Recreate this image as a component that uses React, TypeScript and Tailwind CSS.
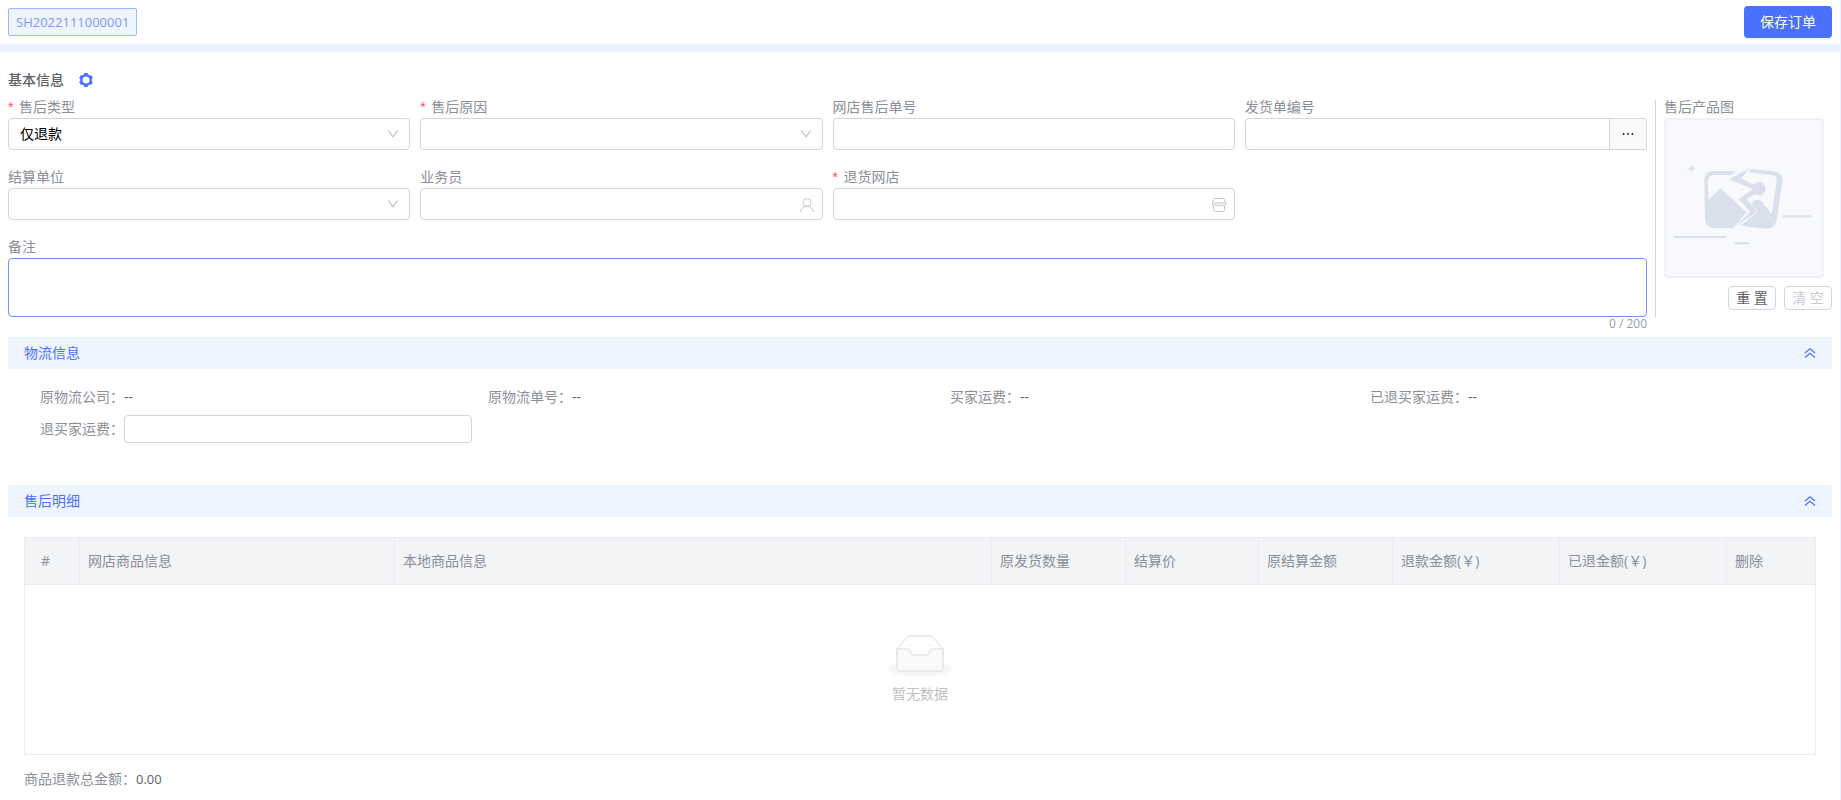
import React, { useState } from "react";
import { AiOutlineDown, AiOutlineEllipsis } from "react-icons/ai";

const inputClass =
  "block h-8 w-full rounded border border-[#d0d4dd] bg-white px-[11px] text-black outline-none";

interface FieldProps {
  id: string;
  label: string;
  required?: boolean;
  children: React.ReactNode;
}

const Field: React.FC<FieldProps> = ({ id, label, required, children }) => (
  <div>
    <label htmlFor={id} className="flex h-[22px] items-center text-[#8c8f96]">
      {required && (
        <span className="mr-1 w-[7px] font-['Liberation_Sans'] text-[#ff4d4f]">*</span>
      )}
      {label}
    </label>
    {children}
  </div>
);

interface SelectProps {
  id: string;
  options: string[];
}

const Select: React.FC<SelectProps> = ({ id, options }) => (
  <div className="relative">
    <select id={id} className={`${inputClass} appearance-none`}>
      {options.map((option) => (
        <option key={option}>{option}</option>
      ))}
    </select>
    <AiOutlineDown className="pointer-events-none absolute top-[9px] right-2.5 h-3.5 w-3.5 text-[#bfbfbf]" />
  </div>
);

const GearIcon = () => (
  <svg viewBox="0 0 14 14" className="h-3.5 w-3.5" fill="none" stroke="currentColor">
    <circle cx="7" cy="7" r="4.700" strokeWidth="2.400" />
    <path
      strokeWidth="3.600"
      d="M7 0v2M7 12v2M.94 3.500l1.730 1M11.330 9.500l1.730 1M.94 10.500l1.730-1M11.330 4.500l1.730-1"
    />
  </svg>
);

const UserIcon = () => (
  <svg viewBox="0 0 14 14" className="h-3.5 w-3.5" fill="none" stroke="currentColor">
    <circle cx="7" cy="4.6" r="4" />
    <path d="M.6 13.9C.8 10.8 3 8.3 7 8.3s6.200 2.500 6.400 5.600" />
  </svg>
);

const ShopIcon = () => (
  <svg viewBox="0 0 14 14" className="h-3.5 w-3.5" fill="none" stroke="currentColor">
    <path d="M2.600.5h8.800c.6 0 1 .3 1.200.9l.9 3.600H.5l.9-3.600C1.600.8 2 .5 2.600.5z" />
    <path d="M.5 5v1.400c0 .8.6 1.300 1.400 1.300 1 0 1.500-.5 2-1.100.7.8 1.200 1.100 1.900 1.100.600 0 .9-.4 1.200-1.100.4.7.7 1.100 1.300 1.100.7 0 1.200-.3 1.800-1.100.5.6 1 1.100 2 1.100.8 0 1.400-.5 1.400-1.300V5" />
    <path d="M1.500 8v3.500c0 1.300.7 2 2 2h7c1.300 0 2-.7 2-2V8" />
  </svg>
);

const DoubleUpIcon = () => (
  <svg viewBox="0 0 12 12" className="h-3 w-3" fill="none" stroke="currentColor" strokeWidth="1.2">
    <path d="M1 6l5-4.300L11 6M1 10.500l5-4.300 5 4.300" />
  </svg>
);

const BrokenImage = () => (
  <svg viewBox="6 6 468 468" className="block h-full w-full" fill="#dae0eb">
    <path d="M83 137c2 9 4 12 14 14-10 2-12 5-14 14-2-9-4-12-14-14 10-2 12-5 14-14z" />
    <rect x="28" y="354" width="160" height="6" rx="3" />
    <rect x="210" y="373" width="46" height="6" rx="3" />
    <rect x="355" y="292" width="87" height="6" rx="3" />
    {/* left half */}
    <path d="M215 159h-65c-18 0-29 12-29 30l2 111c0 18 12 31 30 31h54l41-48-78-72-37 36-1-56c0-13 6-20 18-20h52z" />
    {/* crack and sun */}
    <path d="M257 150l-61 34 70 30-42 29 35 38-46 46 66-46-31-38 24-15c5 3 10 4 15 4a20 20 0 1 0-18-32l-37-19z" />
    {/* right half */}
    <path d="M263 153l64 7c20 2 30 14 28 33l-17 111c-3 19-14 29-32 28l-77-9 53-41-20-23c10-16 23-18 34-5l27 34 15-98c1-12-4-18-15-19l-70-8z" />
  </svg>
);

const EmptyIcon = () => (
  <svg width="64" height="41" viewBox="0 0 64 41">
    <g transform="translate(0 1)" fill="none">
      <ellipse fill="#f5f5f5" cx="32" cy="33" rx="32" ry="7" />
      <g stroke="#d9d9d9">
        <path d="M55 12.76L44.854 1.258C44.367.474 43.656 0 42.907 0H21.093c-.749 0-1.46.474-1.947 1.257L9 12.761V22h46v-9.24z" />
        <path
          fill="#fafafa"
          d="M41.613 15.931c0-1.605.994-2.93 2.227-2.931H55v18.137C55 33.26 53.68 35 52.05 35h-40.1C10.32 35 9 33.259 9 31.137V13h11.16c1.233 0 2.227 1.323 2.227 2.928v.022c0 1.605 1.005 2.901 2.237 2.901h14.752c1.232 0 2.237-1.308 2.237-2.913v-.007z"
        />
      </g>
    </g>
  </svg>
);

interface SectionProps {
  title: string;
  children: React.ReactNode;
}

const Section: React.FC<SectionProps> = ({ title, children }) => {
  const [open, setOpen] = useState(true);

  return (
    <section>
      <button
        type="button"
        aria-expanded={open}
        onClick={() => setOpen(!open)}
        className="flex h-8 w-full items-center justify-between rounded-xs bg-[#eef5ff] px-4 text-[#4a70f8]"
      >
        {title}
        <DoubleUpIcon />
      </button>
      {open && children}
    </section>
  );
};

const logistics = [
  { label: "原物流公司", value: "--" },
  { label: "原物流单号", value: "--" },
  { label: "买家运费", value: "--" },
  { label: "已退买家运费", value: "--" },
];

const columns = [
  { title: "#", className: "w-[55px] pl-4" },
  { title: "网店商品信息", className: "w-[315px] pl-2" },
  { title: "本地商品信息", className: "pl-2" },
  { title: "原发货数量", className: "w-[134px] pl-2" },
  { title: "结算价", className: "w-[133px] pl-2" },
  { title: "原结算金额", className: "w-[134px] pl-2" },
  { title: "退款金额(￥)", className: "w-[167px] pl-2" },
  { title: "已退金额(￥)", className: "w-[167px] pl-2" },
  { title: "删除", className: "w-[88px] pl-2" },
];

const App: React.FC = () => {
  const [remark, setRemark] = useState("");

  return (
    <div className="min-h-screen border-r border-[#ebf2ff] bg-white font-['Open_Sans','Noto_Sans_CJK_SC',sans-serif] text-sm text-[#606266]">
      <header className="flex h-[52px] items-center justify-between border-b-8 border-[#ebf2ff] px-2">
        <span className="flex h-7 items-center rounded-xs border border-[#9bb7ff] bg-[#eef5ff] px-[7px] text-[13px] text-[#7f98fb]">
          SH2022111000001
        </span>
        <button
          type="button"
          className="h-8 rounded bg-[#4971fb] px-4 text-white shadow-[0_2px_0_rgba(0,0,0,0.04)]"
        >
          保存订单
        </button>
      </header>

      <main className="px-2">
        <div className="flex items-center pt-4 pb-1">
          <h2 className="h-6 leading-6 font-medium">基本信息</h2>
          <button type="button" aria-label="设置" className="ml-[15px] text-[#4971fb]">
            <GearIcon />
          </button>
        </div>

        <div className="flex">
          <form className="grid flex-1 grid-cols-4 gap-x-2.5 gap-y-4">
            <Field id="type" label="售后类型" required>
              <Select id="type" options={["仅退款"]} />
            </Field>
            <Field id="reason" label="售后原因" required>
              <Select id="reason" options={[""]} />
            </Field>
            <Field id="shopNo" label="网店售后单号">
              <input id="shopNo" className={inputClass} />
            </Field>
            <Field id="deliveryNo" label="发货单编号">
              <div className="flex">
                <input
                  id="deliveryNo"
                  className="h-8 min-w-0 flex-1 rounded-l border border-[#d0d4dd] px-3 outline-none"
                />
                <button
                  type="button"
                  aria-label="选择发货单"
                  className="flex h-8 w-[37px] items-center justify-center rounded-r-xs border border-l-0 border-[#d9d9d9] bg-[#fafafa] text-black"
                >
                  <AiOutlineEllipsis className="h-4 w-4" />
                </button>
              </div>
            </Field>
            <Field id="unit" label="结算单位">
              <Select id="unit" options={[""]} />
            </Field>
            <Field id="salesman" label="业务员">
              <div className="relative">
                <input id="salesman" className={inputClass} />
                <span className="absolute top-2.5 right-[9px] text-[#c4c4c4]">
                  <UserIcon />
                </span>
              </div>
            </Field>
            <Field id="returnShop" label="退货网店" required>
              <div className="relative">
                <input id="returnShop" className={inputClass} />
                <span className="absolute top-2.5 right-[9px] text-[#c4c4c4]">
                  <ShopIcon />
                </span>
              </div>
            </Field>
            <div className="col-span-4">
              <Field id="remark" label="备注">
                <textarea
                  id="remark"
                  maxLength={200}
                  value={remark}
                  onChange={(e) => setRemark(e.target.value)}
                  className="block h-[59px] w-full resize-none rounded border border-[#6f95fb] px-3 py-1 outline-none"
                />
              </Field>
            </div>
          </form>

          <div className="mx-2 mt-1 w-px bg-[#d0d4dd]" />

          <div className="w-[168px]">
            <p className="h-[22px] leading-[22px] text-[#8c8f96]">售后产品图</p>
            <div className="h-40 w-40 overflow-hidden rounded border-2 border-[#f0f1f5] bg-[#f8f9fc]">
              <BrokenImage />
            </div>
            <div className="mt-2 flex justify-end gap-2">
              <button
                type="button"
                className="h-6 w-12 rounded border border-[#d0d4dd] leading-[22px]"
              >
                重 置
              </button>
              <button
                type="button"
                disabled
                className="h-6 w-12 rounded border border-[#d0d4dd] leading-[22px] text-[#c9ccd2]"
              >
                清 空
              </button>
            </div>
          </div>
        </div>
        <p className="h-5 pr-[185px] text-right text-xs leading-3.5 text-[#999ca3]">
          {remark.length} / 200
        </p>

        <Section title="物流信息">
          <div className="grid grid-cols-4 gap-y-1 px-4 pt-3.5 pb-[42px]">
            {logistics.map((item) => (
              <div key={item.label} className="flex h-7 items-center pl-4">
                <span className="flex w-[84px] justify-end whitespace-nowrap text-[#8c8f96]">
                  {item.label}：
                </span>
                <span>{item.value}</span>
              </div>
            ))}
            <div className="flex items-center pl-4">
              <label htmlFor="freight" className="w-[84px] shrink-0 whitespace-nowrap text-[#8c8f96]">
                退买家运费：
              </label>
              <input
                id="freight"
                className="h-7 w-full min-w-0 rounded border border-[#d0d4dd] px-3 outline-none"
              />
            </div>
          </div>
        </Section>

        <Section title="售后明细">
          <div className="px-4 pt-5">
            <table className="w-full table-fixed border-separate border-spacing-0 border border-[#ebecf3]">
              <thead>
                <tr className="bg-[#f2f4f6]">
                  {columns.map((column) => (
                    <th
                      key={column.title}
                      className={`h-[47px] border-r border-b border-[#ebecf3] text-left font-normal text-[#8c8f96] last:border-r-0 ${column.className}`}
                    >
                      {column.title}
                    </th>
                  ))}
                </tr>
              </thead>
              <tbody>
                <tr>
                  <td colSpan={columns.length} className="h-[169px]">
                    <div className="flex flex-col items-center gap-2 text-[#bfbfbf]">
                      <EmptyIcon />
                      <p className="leading-5">暂无数据</p>
                    </div>
                  </td>
                </tr>
              </tbody>
            </table>
            <p className="mt-3 leading-6">
              <span className="text-[#8c8f96]">商品退款总金额：</span>
              <span className="text-[13px]">0.00</span>
            </p>
          </div>
        </Section>
      </main>
    </div>
  );
};

export default App;
